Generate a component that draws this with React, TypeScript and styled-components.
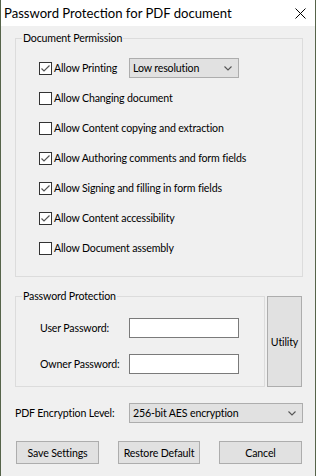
import React from 'react';
import styled, { createGlobalStyle } from 'styled-components';

const Global = createGlobalStyle`
  html, body { margin: 0; padding: 0; background: #f0f0f0; }
  * { box-sizing: border-box; }
`;

const FONT = `Lato, "Liberation Sans", Arial, sans-serif`;

const Window = styled.div`
  width: 316px;
  height: 476px;
  background: #f0f0f0;
  border-left: 1px solid #56644a;
  border-right: 1px solid #56644a;
  font-family: ${FONT};
  font-size: 10.6px;
  letter-spacing: -0.15px;
  color: #000;
  display: flex;
  flex-direction: column;
`;

const TitleBar = styled.div`
  height: 26px;
  background: #fff;
  display: flex;
  align-items: center;
  justify-content: space-between;
  padding: 0 9px 0 3px;
  font-size: 13.1px;
  letter-spacing: 0;
  flex-shrink: 0;
`;

const Content = styled.div`
  padding: 12px 12px 0 14px;
  display: flex;
  flex-direction: column;
`;

const Group = styled.div<{ $h: number; $w?: number }>`
  position: relative;
  border: 1px solid #dcdcdc;
  height: ${(p) => p.$h}px;
  width: ${(p) => (p.$w ? `${p.$w}px` : 'auto')};
`;

const Legend = styled.span`
  position: absolute;
  top: -8px;
  left: 6px;
  padding: 0 1px;
  line-height: 15px;
  background: #f0f0f0;
`;

const PermList = styled.div`
  padding: 14px 0 0 23px;
  display: flex;
  flex-direction: column;
`;

const PermRow = styled.div`
  height: 30px;
  display: flex;
  align-items: center;
`;

const CheckLabel = styled.label<{ $w?: number }>`
  display: flex;
  align-items: center;
  gap: 2px;
  width: ${(p) => (p.$w ? `${p.$w}px` : 'auto')};
`;

const Box = styled.span`
  width: 13px;
  height: 13px;
  border: 1px solid #333;
  background: #fff;
  display: flex;
  flex-shrink: 0;
`;

const Select = styled.div<{ $w: number }>`
  width: ${(p) => p.$w}px;
  height: 20px;
  background: #e1e1e1;
  border: 1px solid #adadad;
  display: flex;
  align-items: center;
  justify-content: space-between;
  padding: 0 6px 0 3px;
`;

const PassRow = styled.div`
  display: flex;
  gap: 2px;
  margin-top: 19px;
`;

const FieldList = styled.div`
  padding: 21px 0 0 24px;
  display: flex;
  flex-direction: column;
  gap: 16px;
`;

const FieldRow = styled.div`
  display: flex;
  align-items: center;
`;

const FieldLabel = styled.span<{ $w: number }>`
  width: ${(p) => p.$w}px;
`;

const Input = styled.div`
  width: 110px;
  height: 20px;
  border: 1px solid #7a7a7a;
  background: #fff;
`;

const UtilityButton = styled.div`
  width: 35px;
  height: 91px;
  background: #e1e1e1;
  border: 1px solid #adadad;
  display: flex;
  align-items: center;
  justify-content: center;
`;

const EncRow = styled.div`
  display: flex;
  align-items: center;
  margin-top: 16px;
`;

const ButtonBar = styled.div`
  display: flex;
  justify-content: space-between;
  padding: 0 1px;
  margin-top: 18px;
`;

const Button = styled.div<{ $w: number }>`
  width: ${(p) => p.$w}px;
  height: 23px;
  background: #e1e1e1;
  border: 1px solid #adadad;
  display: flex;
  align-items: center;
  justify-content: center;
`;

const Chevron = () => (
  <svg width="8" height="5" viewBox="0 0 8 5">
    <polyline points="0.5,0.5 4,4 7.5,0.5" fill="none" stroke="#555" strokeWidth="1.1" />
  </svg>
);

const CloseX = () => (
  <svg width="11" height="11" viewBox="0 0 11 11">
    <path d="M0.5 0.5 L10.5 10.5 M10.5 0.5 L0.5 10.5" stroke="#000" strokeWidth="1" />
  </svg>
);

const CheckBox = ({ checked }: { checked: boolean }) => (
  <Box>
    {checked && (
      <svg width="11" height="11" viewBox="0 0 11 11">
        <polyline points="1.5,5.5 4,8 9.5,2.5" fill="none" stroke="#555" strokeWidth="1.2" />
      </svg>
    )}
  </Box>
);

const perms: { label: string; checked: boolean }[] = [
  { label: 'Allow Changing document', checked: false },
  { label: 'Allow Content copying and extraction', checked: false },
  { label: 'Allow Authoring comments and form fields', checked: true },
  { label: 'Allow Signing and filling in form fields', checked: true },
  { label: 'Allow Content accessibility', checked: true },
  { label: 'Allow Document assembly', checked: false },
];

export default function App() {
  return (
    <>
      <Global />
      <Window>
        <TitleBar>
          <span>Password Protection for PDF document</span>
          <CloseX />
        </TitleBar>
        <Content>
          <Group $h={239}>
            <Legend>Document Permission</Legend>
            <PermList>
              <PermRow>
                <CheckLabel $w={90}>
                  <CheckBox checked />
                  <span>Allow Printing</span>
                </CheckLabel>
                <Select $w={110}>
                  <span>Low resolution</span>
                  <Chevron />
                </Select>
              </PermRow>
              {perms.map((p) => (
                <PermRow key={p.label}>
                  <CheckLabel>
                    <CheckBox checked={p.checked} />
                    <span>{p.label}</span>
                  </CheckLabel>
                </PermRow>
              ))}
            </PermList>
          </Group>
          <PassRow>
            <Group $h={91} $w={250}>
              <Legend>Password Protection</Legend>
              <FieldList>
                <FieldRow>
                  <FieldLabel $w={89}>User Password:</FieldLabel>
                  <Input />
                </FieldRow>
                <FieldRow>
                  <FieldLabel $w={89}>Owner Password:</FieldLabel>
                  <Input />
                </FieldRow>
              </FieldList>
            </Group>
            <UtilityButton>Utility</UtilityButton>
          </PassRow>
          <EncRow>
            <FieldLabel $w={114}>PDF Encryption Level:</FieldLabel>
            <Select $w={174}>
              <span>256-bit AES encryption</span>
              <Chevron />
            </Select>
          </EncRow>
          <ButtonBar>
            <Button $w={83}>Save Settings</Button>
            <Button $w={82}>Restore Default</Button>
            <Button $w={83}>Cancel</Button>
          </ButtonBar>
        </Content>
      </Window>
    </>
  );
}
